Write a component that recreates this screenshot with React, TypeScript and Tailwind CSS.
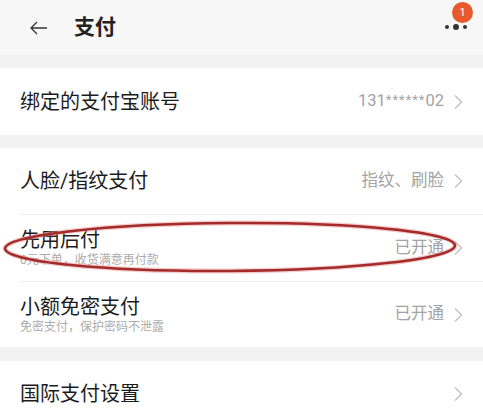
import React from 'react';

const font = { fontFamily: '"Roboto","Noto Sans CJK SC",sans-serif' };

function Chevron() {
    return (
        <svg width="10" height="16" viewBox="0 0 10 16" className="ml-[9px] shrink-0">
            <path d="M2 1.5 L8.5 8 L2 14.5" fill="none" stroke="#c4c4c4" strokeWidth="1.5" />
        </svg>
    );
}

type RowProps = { title: string; sub?: string; value?: React.ReactNode; h: string };

function Row({ title, sub, value, h }: RowProps) {
    return (
        <div className={`flex items-center justify-between bg-white pl-5 pr-[20px] ${h}`}>
            <div className="flex flex-col">
                <span className="text-[20px] leading-6 text-[#1c1c1c]">{title}</span>
                {sub && <span className="text-[12px] leading-4 text-[#ababab]">{sub}</span>}
            </div>
            <div className="flex items-center">
                {value && <span className="text-[16.5px] text-[#a3a3a3]">{value}</span>}
                <Chevron />
            </div>
        </div>
    );
}

export default function App() {
    return (
        <div className="w-[483px] h-[417px] overflow-hidden bg-white" style={font}>
            {/* Header */}
            <header className="relative flex items-center h-[55px] bg-[#f7f7f7] pl-[29px]">
                <svg width="20" height="16" viewBox="0 0 20 16">
                    <path d="M18 8 H2 M8 2 L2 8 L8 14" fill="none" stroke="#333" strokeWidth="1.3" />
                </svg>
                <h1 className="ml-[25px] text-[21px] font-bold text-[#222]">支付</h1>
                <div className="absolute right-[16px] top-[24px] flex items-center gap-[4px]">
                    <span className="w-[4px] h-[4px] rounded-full bg-[#333]" />
                    <span className="w-[6px] h-[6px] rounded-full bg-[#333]" />
                    <span className="w-[4px] h-[4px] rounded-full bg-[#333]" />
                </div>
                <span className="absolute right-[10px] top-[2px] w-[21px] h-[21px] rounded-full bg-[#e65a2c] text-white text-[11px] leading-[21px] text-center">1</span>
            </header>
            <div className="h-[13px] bg-[#f2f2f2]" />

            <Row
                title="绑定的支付宝账号"
                value={<>131<span className="text-[13px] align-[2px] tracking-[1px]">******</span>02</>}
                h="h-[67px]"
            />
            <div className="h-[13px] bg-[#f2f2f2]" />

            <div className="relative">
                <Row title="人脸/指纹支付" value="指纹、刷脸" h="h-[66px]" />
                <div className="ml-5 h-px bg-[#ececec]" />
                <Row title="先用后付" sub="0元下单，收货满意再付款" value="已开通" h="h-[66px]" />
                <div className="ml-5 h-px bg-[#ececec]" />
                <Row title="小额免密支付" sub="免密支付，保护密码不泄露" value="已开通" h="h-[65px]" />

                {/* hand-drawn annotation */}
                <svg className="absolute left-0 top-[70px] pointer-events-none" width="483" height="60" viewBox="0 0 483 60">
                    <ellipse cx="230" cy="29" rx="225" ry="24" fill="none" stroke="#e89a9a" strokeWidth="5" opacity="0.5" transform="rotate(-0.4 230 29)" />
                    <ellipse cx="230" cy="29" rx="225" ry="24" fill="none" stroke="#a52a2a" strokeWidth="2.5" transform="rotate(-0.4 230 29)" />
                </svg>
            </div>
            <div className="h-[14px] bg-[#f2f2f2]" />

            <Row title="国际支付设置" h="h-[66px]" />
        </div>
    );
}
